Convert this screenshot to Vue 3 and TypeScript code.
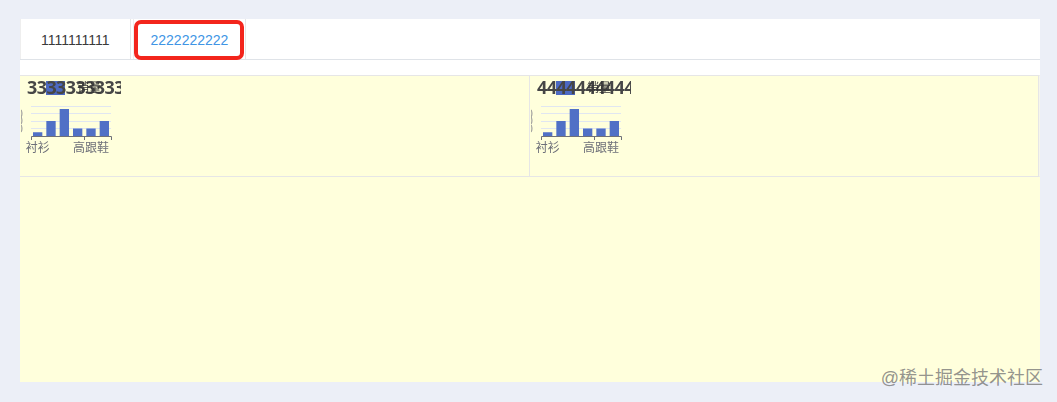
<script setup lang="ts">
const bars = [5, 20, 36, 10, 10, 20]
const charts = [
  { id: 'a', title: '3333333333' },
  { id: 'b', title: '4444444444' },
]
const step = 80 / 6
const barX = (i: number) => 10 + step * i + 2
const barH = (v: number) => (v / 40) * 30
</script>

<template>
  <div class="page">
    <div class="card">
      <div class="tabs">
        <div class="tab">1111111111</div>
        <div class="tab active">2222222222</div>
      </div>
      <div class="mark"></div>
    </div>
    <div class="content">
      <div class="grid">
        <div v-for="c in charts" :key="c.id" class="cell">
          <svg class="chart" width="100" height="100" viewBox="0 0 100 100">
            <rect x="25" y="5" width="19" height="14" fill="#4c69c2" />
            <text class="title" x="6" y="18">{{ c.title }}</text>
            <text class="legend" x="56" y="16">销量</text>
            <g stroke="#e0e6f1" stroke-width="1">
              <line x1="10" x2="90" y1="30.5" y2="30.5" />
              <line x1="10" x2="90" y1="37.5" y2="37.5" />
              <line x1="10" x2="90" y1="45.5" y2="45.5" />
              <line x1="10" x2="90" y1="52.5" y2="52.5" />
            </g>
            <text class="ylabel" x="2" y="42">30</text>
            <text class="ylabel" x="2" y="49">20</text>
            <text class="ylabel" x="2" y="57">10</text>
            <rect
              v-for="(v, i) in bars"
              :key="i"
              :x="barX(i)"
              :y="60 - barH(v)"
              width="9.33"
              :height="barH(v)"
              fill="#5070c6"
            />
            <path d="M10.5 64V60.5H90.5V64M63.5 60.5V64" fill="none" stroke="#6e7079" stroke-width="1" />
            <text class="xlabel" x="16.7" y="76" text-anchor="middle">衬衫</text>
            <text class="xlabel" x="70" y="76" text-anchor="middle">高跟鞋</text>
          </svg>
        </div>
      </div>
    </div>
    <div class="watermark">@稀土掘金技术社区</div>
  </div>
</template>

<style scoped>
.page {
  position: relative;
  box-sizing: border-box;
  width: 1057px;
  height: 402px;
  padding: 19px 17px 20px 20px;
  background: #eceff7;
  font-family: 'Liberation Sans', 'Noto Sans CJK SC', sans-serif;
  overflow: hidden;
}

.card {
  position: relative;
  height: 56px;
  background: #fff;
}

.tabs {
  display: flex;
  height: 41px;
  box-sizing: border-box;
  border-bottom: 1px solid #dfe3e8;
}

.tab {
  box-sizing: border-box;
  height: 40px;
  padding: 0 20px;
  border-right: 1px solid #e6e6e6;
  border-left: 1px solid #eeeeee;
  font-size: 14px;
  line-height: 43px;
  color: #3a3a3a;
}

.tab.active {
  margin-left: 2px;
  padding: 0 17px;
  color: #4095e5;
}

.mark {
  position: absolute;
  left: 114px;
  top: 1px;
  width: 110px;
  height: 40px;
  box-sizing: border-box;
  border: 4px solid #f3251c;
  border-radius: 7px;
}

.content {
  height: 307px;
  background: #ffffdc;
}

.grid {
  display: grid;
  grid-template-columns: 510px 509px;
  height: 102px;
  box-sizing: border-box;
  border-top: 1px solid #e6e6e6;
  border-bottom: 1px solid #e6e6e6;
  border-right: 1px solid #f6f6ec;
}

.cell {
  height: 100px;
  padding-left: 1px;
  border-right: 1px solid #e6e6e6;
}

.chart {
  display: block;
  will-change: opacity;
}

.title {
  font-family: 'Open Sans', 'Liberation Sans', sans-serif;
  font-size: 18px;
  font-weight: 700;
  letter-spacing: -0.6px;
  fill: #464646;
}

.legend {
  font-size: 12px;
  fill: #333;
}

.ylabel {
  font-size: 12px;
  fill: #999;
  text-anchor: end;
}

.xlabel {
  font-size: 12px;
  fill: #6e7079;
}

.watermark {
  position: absolute;
  right: 14px;
  bottom: 13px;
  font-size: 18px;
  color: rgba(120, 120, 120, 0.8);
}
</style>
